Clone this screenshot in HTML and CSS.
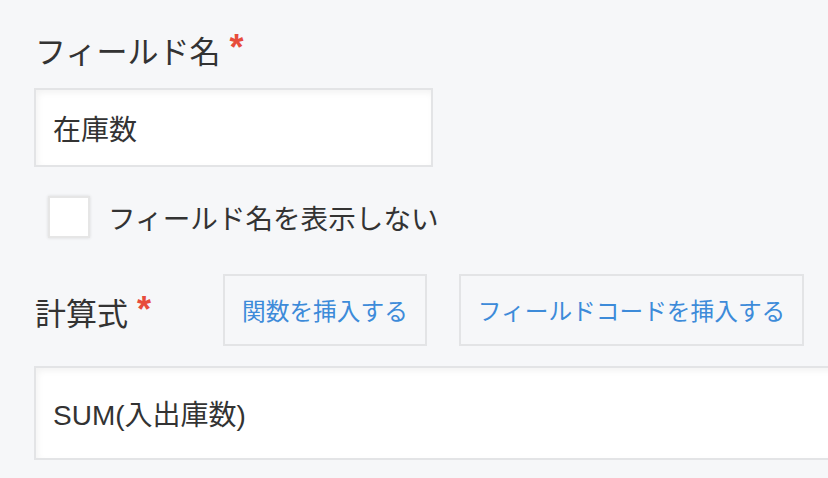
FILE: index.html
```html
<!DOCTYPE html>
<html lang="ja">
<head>
  <meta charset="UTF-8" />
  <meta name="viewport" content="width=device-width, initial-scale=1.0" />
  <title>計算フィールドの設定</title>
  <link rel="stylesheet" href="styles.css">
</head>
<body>
  <div class="settings">
    <div class="field-label">フィールド名<span class="required">*</span></div>
    <div class="text-input name-input">在庫数</div>

    <label class="check-row">
      <span class="checkbox"></span>
      <span class="check-text">フィールド名を表示しない</span>
    </label>

    <div class="formula-head">
      <div class="field-label formula-label">計算式<span class="required">*</span></div>
      <button class="insert-btn">関数を挿入する</button>
      <button class="insert-btn">フィールドコードを挿入する</button>
    </div>
    <div class="text-input formula-input">SUM(入出庫数)</div>
  </div>
</body>
</html>
```

FILE: styles.css
```css
html, body {
  margin: 0;
  overflow: hidden;
}
body {
  background: #f6f7f9;
  color: #333;
  font-family: "Liberation Sans", "Noto Sans CJK JP", sans-serif;
}
.settings {
  padding: 28px 0 0 34px;
}
.field-label {
  font-size: 31px;
  line-height: 40px;
  height: 40px;
  padding-left: 1px;
  white-space: nowrap;
}
.required {
  color: #e74c3c;
  font-family: "Liberation Sans", sans-serif;
  font-weight: bold;
  font-size: 36px;
  margin-left: 9px;
  vertical-align: 3px;
}
.text-input {
  box-sizing: border-box;
  background: #fff;
  border: 2px solid #e3e4e6;
  box-shadow: inset 2px 3px 6px rgba(0, 0, 0, 0.05);
  font-size: 28px;
  padding-left: 17px;
  display: flex;
  align-items: center;
}
.name-input {
  margin-top: 20px;
  width: 399px;
  height: 79px;
}
.check-row {
  display: flex;
  align-items: center;
  gap: 18px;
  margin: 29px 0 0 14px;
  height: 42px;
}
.checkbox {
  box-sizing: border-box;
  width: 42px;
  height: 42px;
  background: #fff;
  border: 2px solid #e6e6e6;
  box-shadow: 0 0 3px rgba(0, 0, 0, 0.12);
}
.check-text {
  font-size: 27.6px;
}
.formula-head {
  display: flex;
  align-items: center;
  gap: 32px;
  margin-top: 36px;
}
.formula-label {
  width: 156px;
}
.insert-btn {
  box-sizing: border-box;
  height: 72px;
  padding: 0 17px;
  background: transparent;
  border: 2px solid #e3e4e6;
  color: #3d8bd9;
  font-family: "Noto Sans CJK JP", sans-serif;
  font-size: 23.7px;
  cursor: pointer;
}
.formula-input {
  margin-top: 20px;
  width: 900px;
  height: 94px;
}
```
